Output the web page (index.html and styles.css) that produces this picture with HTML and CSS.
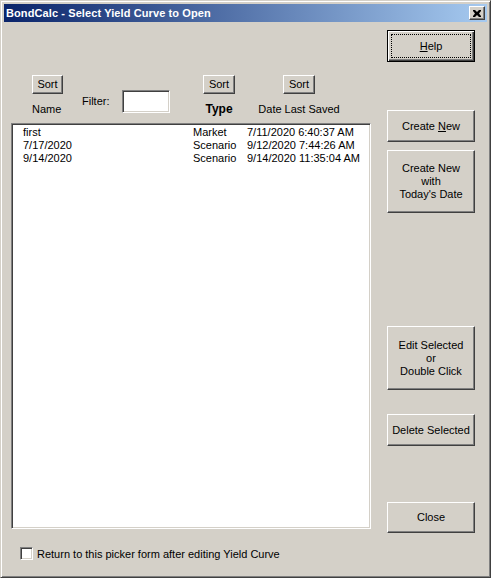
FILE: index.html
```html
<!DOCTYPE html>
<html>
<head>
<meta charset="utf-8">
<link rel="stylesheet" href="styles.css">
</head>
<body>
<div class="window">
  <div class="titlebar">
    <span class="title">BondCalc - Select Yield Curve to Open</span>
    <span class="closebtn"><svg width="8" height="7" viewBox="0 0 8 7"><path d="M0 0h2l2 2 2-2h2v1L6 3.5 8 6v1H6L4 5 2 7H0V6l2-2.5L0 1z" fill="#000"/></svg></span>
  </div>
  <div class="client">
    <div class="left">
      <div class="header">
        <div class="col col-name">
          <span class="btn sort">Sort</span>
          <span class="lbl">Name</span>
        </div>
        <div class="filter">
          <span class="filter-lbl">Filter:</span>
          <span class="field"></span>
        </div>
        <div class="col col-type">
          <span class="btn sort">Sort</span>
          <span class="lbl bold">Type</span>
        </div>
        <div class="col col-date">
          <span class="btn sort">Sort</span>
          <span class="lbl">Date Last Saved</span>
        </div>
      </div>
      <div class="list">
        <div class="row"><span>first</span><span>Market</span><span>7/11/2020 6:40:37 AM</span></div>
        <div class="row"><span>7/17/2020</span><span>Scenario</span><span>9/12/2020 7:44:26 AM</span></div>
        <div class="row"><span>9/14/2020</span><span>Scenario</span><span>9/14/2020 11:35:04 AM</span></div>
      </div>
      <div class="check">
        <span class="box"></span>
        <span>Return to this picker form after editing Yield Curve</span>
      </div>
    </div>
    <div class="right">
      <span class="btn big default b-help"><span class="focus"><span><u>H</u>elp</span></span></span>
      <span class="btn big b-new"><span>Create <u>N</u>ew</span></span>
      <span class="btn big b-today"><span>Create New<br>with<br>Today's Date</span></span>
      <span class="btn big b-edit"><span>Edit Selected<br>or<br>Double Click</span></span>
      <span class="btn big b-delete"><span>Delete Selected</span></span>
      <span class="btn big b-close"><span>Close</span></span>
    </div>
  </div>
</div>
</body>
</html>
```
FILE: styles.css
```css
* { box-sizing: border-box; }
html, body { margin: 0; padding: 0; }
body {
  font-family: "Liberation Sans", Arial, sans-serif;
  font-size: 11px;
  color: #000;
  background: #D4D0C8;
}
.window {
  width: 491px;
  height: 578px;
  background: #D4D0C8;
  border-top: 1px solid #D4D0C8;
  border-left: 1px solid #D4D0C8;
  border-right: 1px solid #404040;
  border-bottom: 1px solid #404040;
  box-shadow: inset 1px 1px 0 #fff, inset -1px -1px 0 #808080;
  padding: 3px 3px 3px 3px;
  display: flex;
  flex-direction: column;
}
.titlebar {
  height: 18px;
  background: linear-gradient(to right, #0A246A, #A6CAF0);
  display: flex;
  align-items: center;
  justify-content: space-between;
  padding: 0 2px 0 2px;
}
.title {
  color: #fff;
  font-weight: bold;
  font-size: 11px;
  letter-spacing: 0.1px;
}
.closebtn {
  width: 16px;
  height: 14px;
  background: #D4D0C8;
  border-top: 1px solid #fff;
  border-left: 1px solid #fff;
  border-right: 1px solid #404040;
  border-bottom: 1px solid #404040;
  box-shadow: inset -1px -1px 0 #808080;
  display: flex;
  align-items: center;
  justify-content: center;
  padding-right: 1px;
}
.closebtn svg { display: block; }
.client {
  flex: 1;
  display: flex;
  padding-left: 7px;
}
.left {
  width: 360px;
  display: flex;
  flex-direction: column;
  padding-top: 53px;
}
.header {
  height: 48px;
  display: flex;
  align-items: flex-start;
}
.col {
  display: flex;
  flex-direction: column;
  flex-shrink: 0;
}
.col-name { width: 31px; margin-left: 21px; align-items: flex-start; }
.col-type { width: 32px; margin-left: 32px; align-items: center; }
.col-date { width: 80px; margin-left: 24px; align-items: center; }
.lbl {
  margin-top: 9px;
  line-height: 13px;
  white-space: nowrap;
}
.bold { font-weight: bold; font-size: 12px; }
.btn {
  display: flex;
  align-items: center;
  justify-content: center;
  text-align: center;
  background: #D4D0C8;
  border-top: 1px solid #fff;
  border-left: 1px solid #fff;
  border-right: 1px solid #404040;
  border-bottom: 1px solid #404040;
  box-shadow: inset -1px -1px 0 #808080;
  line-height: 13px;
  white-space: nowrap;
}
.sort {
  width: 32px;
  height: 19px;
  padding-bottom: 1px;
}
.col-name .sort { width: 31px; }
.filter {
  width: 89px;
  margin-left: 19px;
  flex-shrink: 0;
  display: flex;
  align-items: flex-start;
}
.filter-lbl {
  margin-top: 20px;
  line-height: 13px;
}
.field {
  margin-left: 12px;
  margin-top: 15px;
  width: 48px;
  height: 23px;
  background: #fff;
  border-top: 1px solid #808080;
  border-left: 1px solid #808080;
  border-right: 1px solid #fff;
  border-bottom: 1px solid #fff;
  box-shadow: inset 1px 1px 0 #404040, inset -1px -1px 0 #D4D0C8;
}
.list {
  height: 406px;
  background: #fff;
  border-top: 1px solid #808080;
  border-left: 1px solid #808080;
  border-right: 1px solid #fff;
  border-bottom: 1px solid #fff;
  box-shadow: inset 1px 1px 0 #404040, inset -1px -1px 0 #D4D0C8;
  padding: 2px 0 0 11px;
}
.row {
  display: grid;
  grid-template-columns: 170px 54px auto;
  height: 13px;
  line-height: 13px;
  white-space: nowrap;
}
.check {
  margin-top: 18px;
  margin-left: 9px;
  display: flex;
  align-items: center;
  height: 13px;
}
.box {
  width: 13px;
  height: 13px;
  background: #fff;
  border-top: 1px solid #808080;
  border-left: 1px solid #808080;
  border-right: 1px solid #fff;
  border-bottom: 1px solid #fff;
  box-shadow: inset 1px 1px 0 #404040, inset -1px -1px 0 #D4D0C8;
  margin-right: 4px;
  flex-shrink: 0;
}
.right {
  margin-left: 16px;
  width: 88px;
  display: flex;
  flex-direction: column;
}
.big { width: 88px; }
.default {
  border: 1px solid #000;
  box-shadow: inset 1px 1px 0 #fff, inset -1px -1px 0 #404040, inset -2px -2px 0 #808080;
  padding: 3px;
}
.focus {
  width: 100%;
  height: 100%;
  border: 1px dotted #000;
  display: flex;
  align-items: center;
  justify-content: center;
}
.b-help { margin-top: 8px; height: 32px; }
.b-new { margin-top: 48px; height: 32px; }
.b-today { margin-top: 8px; height: 63px; }
.b-edit { margin-top: 113px; height: 64px; }
.b-delete { margin-top: 24px; height: 32px; }
.b-close { margin-top: 56px; height: 31px; }
```
